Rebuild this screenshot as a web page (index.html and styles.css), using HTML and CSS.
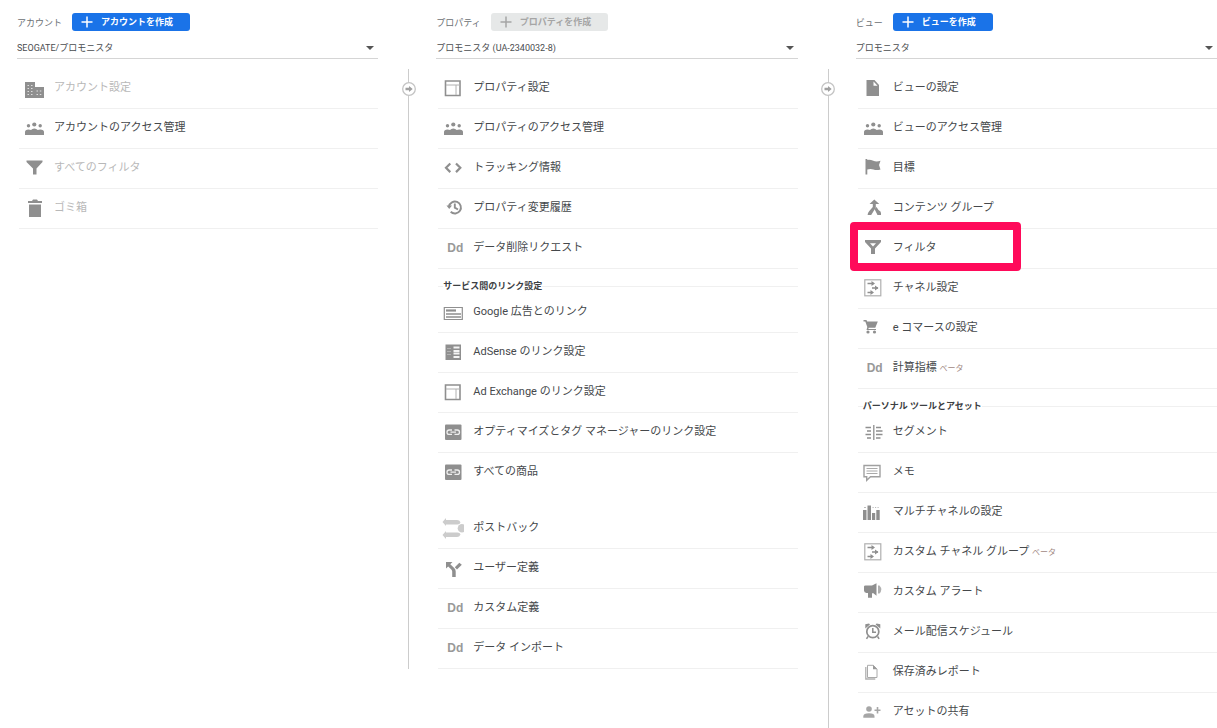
FILE: index.html
```html
<!DOCTYPE html>
<html lang="ja">
<head>
<meta charset="utf-8">
<meta name="viewport" content="width=device-width, initial-scale=1">
<title>管理</title>
<link rel="stylesheet" href="styles.css">
</head>
<body>
<svg class="sprite" aria-hidden="true">
  <symbol id="plus" viewBox="0 0 12 12"><path d="M6 0.500v11M0.500 6h11" stroke="currentColor" stroke-width="1.500"/></symbol>
  <symbol id="caret" viewBox="0 0 8 4"><path d="M0 0h8L4 4z"/></symbol>
  <symbol id="go" viewBox="0 0 14 14"><circle cx="7" cy="7" r="6.300" fill="#fff" stroke="#c4c4c4" stroke-width="1.300"/><path d="M3.500 5.700h3.500V4l3.700 3L7 10V8.300H3.500z" fill="#a0a0a0"/></symbol>
  <symbol id="building" viewBox="0 0 22 23"><path d="M2 5h10v5h9v11H2z"/><path d="M4.500 8.500h1.500M8 8.500h1.500M4.500 11.500h1.500M8 11.500h1.500M4.500 14.500h1.500M8 14.500h1.500M4.500 17.500h1.500M8 17.500h1.500M13.500 14h1.500M16.800 14h1.500M13.500 17.500h1.500M16.800 17.500h1.500" stroke="#ddd" stroke-width="1.100"/></symbol>
  <symbol id="people" viewBox="0 0 22 23"><circle cx="11.300" cy="7.500" r="2.100"/><circle cx="5.500" cy="8.800" r="1.700"/><circle cx="17.200" cy="8.800" r="1.700"/><path d="M2 18v-3q0-2.500 3.500-2.500 1.500 0 2.500.5 1.200-1.500 3.300-1.500t3.400 1.500q1-.5 2.500-.5 3.800 0 3.800 2.500v3z"/></symbol>
  <symbol id="funnel" viewBox="0 0 22 23"><path d="M3.500 3.500h16v1.500l-6 6.500v6h-3.500v-6l-6.500-6.500z"/></symbol>
  <symbol id="funnel-open" viewBox="0 0 22 23"><path d="M3 3h16v2l-6 6.500v5.500H9v-5.500L3 5z"/><path d="M8 6.300h6L11 9.500z" fill="#fff"/></symbol>
  <symbol id="trash" viewBox="0 0 22 23"><path d="M5 4h4l1-1.500h4L15 4h4v2H5zM6 7.500h12V20H6z"/></symbol>
  <symbol id="frame" viewBox="0 0 22 23"><path d="M3.500 4h14.500v14.500H3.500z" fill="none" stroke="currentColor" stroke-width="1.600"/><path d="M4 8h14M14 8v10" fill="none" stroke="#b0b0b0"/></symbol>
  <symbol id="code" viewBox="0 0 22 23"><path d="M8.300 6.500L4 10.800l4.300 4.300M14 6.500l4.300 4.300-4.300 4.300" fill="none" stroke="currentColor" stroke-width="2.200"/></symbol>
  <symbol id="history" viewBox="0 0 22 23"><path d="M7 9.500a6 6 0 1 1 1.700 5.300M12.800 6.500v4.200l3.200 1.800" fill="none" stroke="currentColor" stroke-width="1.900"/><path d="M4.500 8.500h5.500L7.200 12z"/></symbol>
  <symbol id="ad" viewBox="0 0 22 23"><path d="M2.300 6.500h18v12h-18z" fill="none" stroke="currentColor" stroke-width="1.200"/><path d="M4 9.500h10" stroke="currentColor" stroke-width="2.200"/><path d="M4 13h15M4 16h15" stroke="currentColor" stroke-width="1.500"/></symbol>
  <symbol id="adsense" viewBox="0 0 22 23"><path d="M3.500 3.500H19V19H3.500z"/><path d="M11.500 6.500h6M11.500 10h6M11.500 12.500h6M11.500 16h6" stroke="#f4f4f4" stroke-width="2"/><path d="M5 7.500h4M5 10.500h4M5 13.500h4" stroke="#bbb" stroke-width=".8"/></symbol>
  <symbol id="link" viewBox="0 0 22 23"><rect x="3" y="3.500" width="16.500" height="15.500" rx="1"/><path d="M10 9H7.200a2.200 2.200 0 0 0 0 4.400H10M12.500 9h2.800a2.200 2.200 0 0 1 0 4.400h-2.800M8.500 11.200H14" fill="none" stroke="#eee" stroke-width="1.300"/></symbol>
  <symbol id="postback" viewBox="0 0 22 23"><path d="M0.500 5L4 1v2h11q2.500 0 3.500 2.200Q18 7.500 15.500 7.500H4V9zM0.500 18L4 14v1.500h11.500q2.500 0 3 2-1 2.500-3.500 2.500H4v2z"/><circle cx="20" cy="11.200" r="4.300"/></symbol>
  <symbol id="fork" viewBox="0 0 22 23"><path d="M4 5h6.500L8.300 7.200l3.900 3.900q1.500 1.300 1.500 3.400V20h-3.500v-5.500q0-1.200-.9-2.100L6.200 9.500 4 11.500z"/><path d="M12.800 10.200l4.500-4.500 2.500 2-4.800 4.800z"/></symbol>
  <symbol id="doc" viewBox="0 0 22 23"><path d="M4.500 3h8l4.500 5v11H4.500z"/><path d="M11.500 4.500v4.300h4z" fill="#fff"/></symbol>
  <symbol id="flag" viewBox="0 0 22 23"><path d="M3.500 2h1.800v1q3-.5 6 .8t7.200 0L17 8l1.500 4.500q-4 1-7 0t-6.200 0v5H3.500z"/></symbol>
  <symbol id="merge" viewBox="0 0 22 23"><path d="M12.300 2.500L17.300 7h-3.500v3.500l-4.600 7.500H5.600q0-2 1.700-4l3.500-4V7H7.500z"/><path d="M12.500 12l2-2q1.500 3 4 4.500.8 1.500.5 3.500h-3.500z"/></symbol>
  <symbol id="channel" viewBox="0 0 22 23"><rect x="2.800" y="2.800" width="16" height="16" fill="none" stroke="#b0b0b0" stroke-width="1.200"/><path d="M5.500 6.500h6M10 11h6M5.500 15.500h5" stroke="currentColor" stroke-width="1.600"/><path d="M9.500 4l3.500 2.500L9.500 9zM13 8.500l3.500 2.500-3.500 2.500zM8.500 13l3.500 2.500L8.500 18z"/></symbol>
  <symbol id="cart" viewBox="0 0 22 23"><path d="M1.500 3h3l.6 1.500H15.800l-2.500 6.300H6.800l-.5 1.200H14V13H4.500l.8-3L3.300 4.500H1.500z"/><circle cx="6" cy="15" r="1.600"/><circle cx="12.500" cy="15" r="1.600"/></symbol>
  <symbol id="segment" viewBox="0 0 22 23"><path d="M11.800 4v15" stroke="currentColor" stroke-width="1.300"/><path d="M3.500 6.500h5.500M5 10h4M3.500 13.500h5.500M5 17h4M14 6.500h5M14 10h6.500M14 13.500h6.500M14 17h4.500" stroke="currentColor" stroke-width="1.500"/></symbol>
  <symbol id="memo" viewBox="0 0 22 23"><path d="M2 4.500h16v11.300H8.500l-3.800 3.500v-3.500H2z" fill="none" stroke="#a0a0a0" stroke-width="1.400"/><path d="M4.500 7.500h11M4.500 10h11M4.500 12.500h11" stroke="#aaa" stroke-width="1.200"/></symbol>
  <symbol id="bars" viewBox="0 0 22 23"><path d="M1 9h3.500v10H1zM5.500 4.500H9V19H5.500zM10 12h3.200v7H10zM14.300 9h3.400v10h-3.400z"/><path d="M2 6.500h2M10.500 6.500h1.200M13 6.500h1.200M15.500 6.500h1.200" stroke="#bbb"/></symbol>
  <symbol id="megaphone" viewBox="0 0 22 23"><path d="M2 5.500q0-1 1.500-1H10l4.500-2.300v12.500L11 12l-1 .5v4.200H6V12H4.500Q2 11.500 2 9.500z"/><path d="M16 4.500h1.500Q19.300 6.500 19.300 8.500T17.500 12.500H16z" opacity=".7"/></symbol>
  <symbol id="alarm" viewBox="0 0 22 23"><circle cx="10.800" cy="10.700" r="6" fill="none" stroke="currentColor" stroke-width="1.700"/><path d="M10.800 7v4.200H14M6 15.500l-1.500 2.300M15.600 15.500l1.500 2.300" fill="none" stroke="currentColor" stroke-width="1.500"/><path d="M3.300 7.500V3.300L7 2.500l1 1zM18.300 7.500V3.300l-3.700-.8-1 1z"/></symbol>
  <symbol id="copy" viewBox="0 0 22 23"><path d="M5.500 4.300h5.800L15 8v8.500H5.500z" fill="none" stroke="#aaa" stroke-width="1"/><path d="M11 4v4.200h4" fill="#999"/><path d="M3.800 6v12h9.500" fill="none" stroke="#b0b0b0" stroke-width="1.300"/></symbol>
  <symbol id="person-add" viewBox="0 0 22 23"><circle cx="7" cy="8" r="2.800"/><path d="M1.300 16.700v-1.500q0-3 5.700-3t5.500 3v1.500zM12.500 8.500h2.200V6h1.600v2.500h2.200v1.600h-2.200v2.500h-1.600v-2.500h-2.200z"/></symbol>
</svg>

<main class="admin">
  <section class="column">
    <header class="column-head">
      <div class="title-row">
        <label class="title" for="account">アカウント</label>
        <button class="create" type="button"><svg class="plus"><use href="#plus"/></svg>アカウントを作成</button>
      </div>
      <div class="picker">
        <select id="account" class="picker-select"><option>SEOGATE/プロモニスタ</option></select>
        <svg class="caret"><use href="#caret"/></svg>
      </div>
    </header>
    <ul class="list">
      <li class="item"><a class="row row-disabled" aria-disabled="true"><svg class="icon"><use href="#building"/></svg><span class="text">アカウント設定</span></a></li>
      <li class="item"><a class="row" href="#"><svg class="icon"><use href="#people"/></svg><span class="text">アカウントのアクセス管理</span></a></li>
      <li class="item"><a class="row row-disabled" aria-disabled="true"><svg class="icon"><use href="#funnel"/></svg><span class="text">すべてのフィルタ</span></a></li>
      <li class="item"><a class="row row-disabled" aria-disabled="true"><svg class="icon"><use href="#trash"/></svg><span class="text">ゴミ箱</span></a></li>
    </ul>
  </section>

  <section class="column column-linked">
    <header class="column-head">
      <div class="title-row">
        <label class="title" for="property">プロパティ</label>
        <button class="create" type="button" disabled><svg class="plus"><use href="#plus"/></svg>プロパティを作成</button>
      </div>
      <div class="picker">
        <select id="property" class="picker-select"><option>プロモニスタ (UA-2340032-8)</option></select>
        <svg class="caret"><use href="#caret"/></svg>
      </div>
    </header>
    <div class="divider"><svg class="go"><use href="#go"/></svg></div>
    <ul class="list">
      <li class="item"><a class="row" href="#"><svg class="icon"><use href="#frame"/></svg><span class="text">プロパティ設定</span></a></li>
      <li class="item"><a class="row" href="#"><svg class="icon"><use href="#people"/></svg><span class="text">プロパティのアクセス管理</span></a></li>
      <li class="item"><a class="row" href="#"><svg class="icon"><use href="#code"/></svg><span class="text">トラッキング情報</span></a></li>
      <li class="item"><a class="row" href="#"><svg class="icon"><use href="#history"/></svg><span class="text">プロパティ変更履歴</span></a></li>
      <li class="item"><a class="row" href="#"><span class="icon icon-dd">Dd</span><span class="text">データ削除リクエスト</span></a></li>
      <li class="group">サービス間のリンク設定</li>
      <li class="item"><a class="row" href="#"><svg class="icon"><use href="#ad"/></svg><span class="text">Google 広告とのリンク</span></a></li>
      <li class="item"><a class="row" href="#"><svg class="icon"><use href="#adsense"/></svg><span class="text">AdSense のリンク設定</span></a></li>
      <li class="item"><a class="row" href="#"><svg class="icon"><use href="#frame"/></svg><span class="text">Ad Exchange のリンク設定</span></a></li>
      <li class="item"><a class="row" href="#"><svg class="icon"><use href="#link"/></svg><span class="text">オプティマイズとタグ マネージャーのリンク設定</span></a></li>
      <li class="item item-last"><a class="row" href="#"><svg class="icon"><use href="#link"/></svg><span class="text">すべての商品</span></a></li>
      <li class="item"><a class="row" href="#"><svg class="icon icon-pale"><use href="#postback"/></svg><span class="text">ポストバック</span></a></li>
      <li class="item"><a class="row" href="#"><svg class="icon"><use href="#fork"/></svg><span class="text">ユーザー定義</span></a></li>
      <li class="item"><a class="row" href="#"><span class="icon icon-dd">Dd</span><span class="text">カスタム定義</span></a></li>
      <li class="item"><a class="row" href="#"><span class="icon icon-dd">Dd</span><span class="text">データ インポート</span></a></li>
    </ul>
  </section>

  <section class="column column-linked">
    <header class="column-head">
      <div class="title-row">
        <label class="title" for="view">ビュー</label>
        <button class="create" type="button"><svg class="plus"><use href="#plus"/></svg>ビューを作成</button>
      </div>
      <div class="picker">
        <select id="view" class="picker-select"><option>プロモニスタ</option></select>
        <svg class="caret"><use href="#caret"/></svg>
      </div>
    </header>
    <div class="divider"><svg class="go"><use href="#go"/></svg></div>
    <ul class="list">
      <li class="item"><a class="row" href="#"><svg class="icon"><use href="#doc"/></svg><span class="text">ビューの設定</span></a></li>
      <li class="item"><a class="row" href="#"><svg class="icon"><use href="#people"/></svg><span class="text">ビューのアクセス管理</span></a></li>
      <li class="item"><a class="row" href="#"><svg class="icon"><use href="#flag"/></svg><span class="text">目標</span></a></li>
      <li class="item"><a class="row" href="#"><svg class="icon"><use href="#merge"/></svg><span class="text">コンテンツ グループ</span></a></li>
      <li class="item item-marked"><a class="row" href="#"><svg class="icon"><use href="#funnel-open"/></svg><span class="text">フィルタ</span></a></li>
      <li class="item"><a class="row" href="#"><svg class="icon"><use href="#channel"/></svg><span class="text">チャネル設定</span></a></li>
      <li class="item"><a class="row" href="#"><svg class="icon"><use href="#cart"/></svg><span class="text">e コマースの設定</span></a></li>
      <li class="item"><a class="row" href="#"><span class="icon icon-dd">Dd</span><span class="text">計算指標 <small class="beta">ベータ</small></span></a></li>
      <li class="group">パーソナル ツールとアセット</li>
      <li class="item"><a class="row" href="#"><svg class="icon"><use href="#segment"/></svg><span class="text">セグメント</span></a></li>
      <li class="item"><a class="row" href="#"><svg class="icon"><use href="#memo"/></svg><span class="text">メモ</span></a></li>
      <li class="item"><a class="row" href="#"><svg class="icon"><use href="#bars"/></svg><span class="text">マルチチャネルの設定</span></a></li>
      <li class="item"><a class="row" href="#"><svg class="icon"><use href="#channel"/></svg><span class="text">カスタム チャネル グループ <small class="beta">ベータ</small></span></a></li>
      <li class="item"><a class="row" href="#"><svg class="icon"><use href="#megaphone"/></svg><span class="text">カスタム アラート</span></a></li>
      <li class="item"><a class="row" href="#"><svg class="icon"><use href="#alarm"/></svg><span class="text">メール配信スケジュール</span></a></li>
      <li class="item"><a class="row" href="#"><svg class="icon"><use href="#copy"/></svg><span class="text">保存済みレポート</span></a></li>
      <li class="item"><a class="row" href="#"><svg class="icon icon-soft"><use href="#person-add"/></svg><span class="text">アセットの共有</span></a></li>
    </ul>
  </section>
</main>
</body>
</html>
```
FILE: styles.css
```css
*,
*::before,
*::after { box-sizing: border-box; }

html { scrollbar-width: none; }

body {
  margin: 0;
  background: #fff;
  color: #3c4043;
  font-family: Roboto, "Noto Sans CJK JP", sans-serif;
  font-size: 11px;
}

svg { fill: currentColor; flex: none; }

.sprite { display: none; }

.admin {
  display: flex;
  align-items: flex-start;
  padding: 13px 0 0 17px;
}

.column { flex: 1 1 0; min-width: 0; }

.column-linked {
  flex-basis: 58px;
  display: grid;
  grid-template-columns: 58px minmax(0, 1fr);
}

.column-linked .column-head { grid-column: 2; }

.column-head { margin-bottom: 10px; }

.title-row {
  display: flex;
  align-items: center;
  gap: 10px;
  height: 18px;
}

.title { font-size: 9px; color: #6b6f73; }

.create {
  display: flex;
  align-items: center;
  gap: 8px;
  height: 18px;
  padding: 0 17px 0 9px;
  border: 0;
  border-radius: 3px;
  background: #1a73e8;
  color: #fff;
  font: bold 9px/16px Roboto, "Noto Sans CJK JP", sans-serif;
}

.create:disabled { background: #e6e8e8; color: #a5a5a5; }

.plus { width: 12px; height: 12px; }

.picker {
  position: relative;
  padding-top: 6px;
  border-bottom: 1px solid #d5d5d5;
}

.picker-select {
  display: block;
  width: 100%;
  height: 21px;
  padding: 0 20px 0 0;
  border: 0;
  appearance: none;
  background: none;
  color: #4a4d50;
  font: 9px Roboto, "Noto Sans CJK JP", sans-serif;
}

.caret {
  position: absolute;
  right: 4px;
  bottom: 8px;
  width: 8px;
  height: 4px;
  color: #555;
  pointer-events: none;
}

.divider {
  width: 1px;
  margin-left: 30px;
  background: #ccc;
  display: flex;
  justify-content: center;
  align-items: flex-start;
  padding-top: 13px;
}

.go { width: 14px; height: 14px; }

.list {
  margin: 0 0 0 2px;
  padding: 0;
  list-style: none;
}

.item {
  position: relative;
  border-bottom: 1px solid #f0f0f0;
}

.item-last { border-color: transparent; margin-bottom: 16px; }

.row {
  display: flex;
  align-items: center;
  gap: 9px;
  height: 39px;
  padding-left: 4px;
  color: #45484b;
  text-decoration: none;
}

.row-disabled { color: #b8b8b8; }

.icon { flex: none; width: 22px; height: 23px; color: #8f8f8f; }

.icon-dd {
  padding-left: 5px;
  color: #999;
  font: bold 12px/23px "Liberation Sans", sans-serif;
}

.icon-pale { color: #ccc; }

.icon-soft { color: #a6a6a6; }

.text { padding-bottom: 1px; line-height: 16px; white-space: nowrap; }

.beta { font-size: 8px; color: #a1887f; }

.group {
  display: flex;
  align-items: center;
  padding: 12px 0 1px;
  font-size: 9px;
  font-weight: bold;
  line-height: 11px;
}

.group::before,
.group::after {
  content: "";
  width: 5px;
  height: 1px;
  background: #f0f0f0;
}

.group::after { flex: 1; }

.item-marked::after {
  content: "";
  position: absolute;
  left: -8px;
  top: -7px;
  width: 171px;
  height: 49px;
  border: 8px solid #ff0a5a;
  border-radius: 4px;
  pointer-events: none;
}
```
